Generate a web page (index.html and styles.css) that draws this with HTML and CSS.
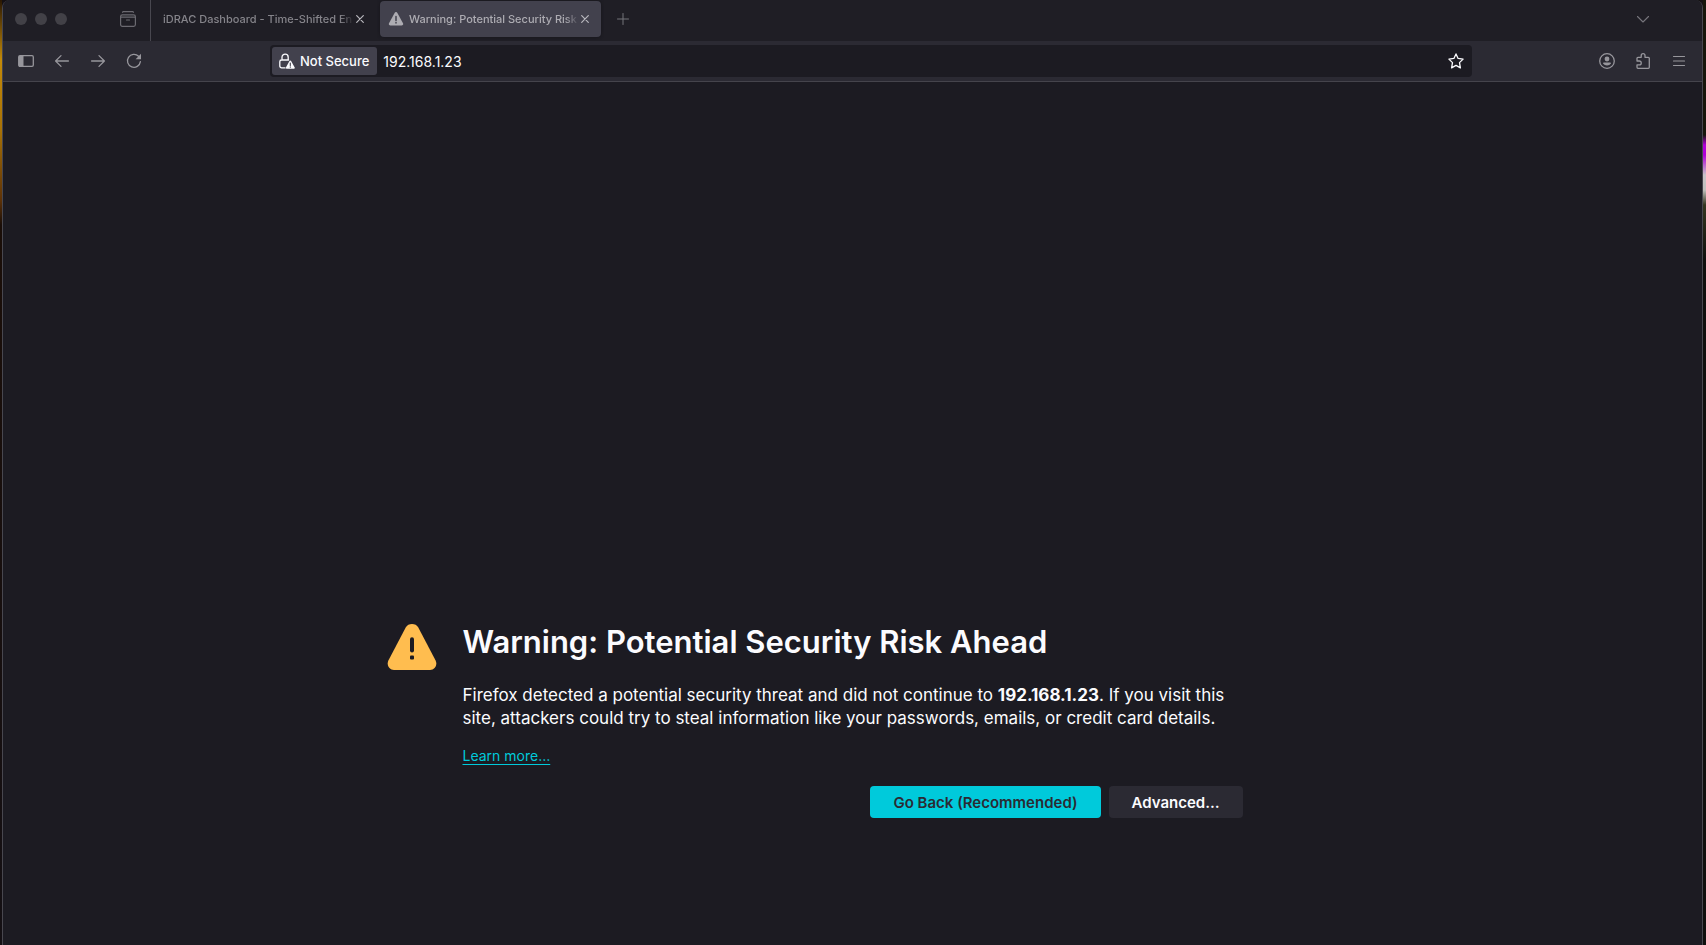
FILE: index.html
```html
<!DOCTYPE html>
<html lang="en">
<head>
<meta charset="utf-8">
<title>Warning: Potential Security Risk Ahead</title>
<link rel="stylesheet" href="styles.css">
</head>
<body>
<div class="window">
  <header class="tabbar">
    <div class="lights"><span class="light"></span><span class="light"></span><span class="light"></span></div>
    <button class="tool view-button" aria-label="Firefox View">
      <svg width="16" height="16" viewBox="0 0 16 16" fill="none" stroke="currentColor" stroke-width="1.2" stroke-linecap="round"><path d="M2.5 1.300Q2.800.7 3.500.7h9q.7 0 1 .6"/><rect x=".6" y="3.900" width="14.800" height="11.400" rx="1.800"/><path d="M.8 6.200h14.400M6.500 9h3"/></svg>
    </button>
    <div class="tabs">
      <div class="tab">
        <span class="tab-label">iDRAC Dashboard - Time-Shifted En</span>
        <button class="close" aria-label="Close tab"><svg width="8" height="8" viewBox="0 0 8 8" stroke="currentColor" stroke-width="1.2" stroke-linecap="round"><path d="M.7.7l6.600 6.600M7.300.7L.7 7.300"/></svg></button>
      </div>
      <div class="tab tab-active">
        <svg class="tab-icon" width="16" height="16" viewBox="0 0 16 16"><path fill="currentColor" d="M6.600 1.900a1.600 1.600 0 0 1 2.800 0l5.600 10.400a1.600 1.600 0 0 1-1.400 2.300H2.400A1.600 1.600 0 0 1 1 12.300z"/><path d="M8 5.600v3.800M8 11.600v.4" stroke="#42414d" stroke-width="1.500" stroke-linecap="round"/></svg>
        <span class="tab-label">Warning: Potential Security Risk</span>
        <button class="close" aria-label="Close tab"><svg width="8" height="8" viewBox="0 0 8 8" stroke="currentColor" stroke-width="1.2" stroke-linecap="round"><path d="M.7.7l6.600 6.600M7.300.7L.7 7.300"/></svg></button>
      </div>
    </div>
    <button class="tool dim" aria-label="New tab"><svg width="12" height="12" viewBox="0 0 12 12" stroke="currentColor" stroke-linecap="round"><path d="M6 .5v11M.5 6h11"/></svg></button>
    <button class="tool dim all-tabs" aria-label="List all tabs"><svg width="14" height="14" viewBox="0 0 14 14" fill="none" stroke="currentColor" stroke-width="1.1" stroke-linecap="round" stroke-linejoin="round"><path d="M1.500 4.500L7 10l5.500-5.500"/></svg></button>
  </header>

  <nav class="navbar">
    <button class="tool" aria-label="Sidebar"><svg width="16" height="16" viewBox="0 0 16 16" fill="none" stroke="currentColor" stroke-width="1.3"><rect x=".7" y="2.700" width="14.600" height="10.600" rx="1.300"/><path fill="currentColor" stroke="none" d="M1 3h4.500v10H1z"/></svg></button>
    <button class="tool" aria-label="Back"><svg width="16" height="16" viewBox="0 0 16 16" fill="none" stroke="currentColor" stroke-width="1.300" stroke-linecap="round" stroke-linejoin="round"><path d="M14.400 8H1.600M7 2.600L1.600 8 7 13.400"/></svg></button>
    <button class="tool" aria-label="Forward"><svg width="16" height="16" viewBox="0 0 16 16" fill="none" stroke="currentColor" stroke-width="1.300" stroke-linecap="round" stroke-linejoin="round"><path d="M1.600 8h12.800M9 2.600L14.400 8 9 13.400"/></svg></button>
    <button class="tool" aria-label="Reload"><svg width="16" height="16" viewBox="0 0 16 16" fill="none" stroke="currentColor" stroke-width="1.300" stroke-linecap="round"><path d="M12.600 3.300A6.500 6.500 0 1 0 14.400 8.700"/><path fill="currentColor" stroke="none" d="M15 .8v5.400H9.600z"/></svg></button>
    <div class="urlbar">
      <button class="identity">
        <svg width="16" height="16" viewBox="0 0 16 16" fill="none"><path d="M3 7V4.200a3.100 3.100 0 0 1 6.200 0V7M6 14.900H2.600A1.800 1.800 0 0 1 .8 13.100V8.800A1.800 1.800 0 0 1 2.600 7h7" stroke="currentColor" stroke-width="1.300" stroke-linecap="round"/><path fill="currentColor" d="M10.500 7.900a.9.9 0 0 1 1.600 0l3.600 6.500a.9.9 0 0 1-.8 1.400H7.700a.9.9 0 0 1-.8-1.400z"/><path d="M11.300 10v2.400M11.300 13.900v.3" stroke="#42414d" stroke-width="1.100" stroke-linecap="round"/></svg>
        <span>Not Secure</span>
      </button>
      <input class="address" type="text" value="192.168.1.23" aria-label="Address">
      <button class="bookmark" aria-label="Bookmark this page"><svg width="16" height="16" viewBox="0 0 16 16" fill="none" stroke="currentColor" stroke-width="1.300" stroke-linejoin="round"><path d="M8 .9l2.100 4.500 5 .7-3.600 3.500.9 5.300-4.400-2.500-4.400 2.500.9-5.300L.9 6.100l5-.7z"/></svg></button>
    </div>
    <button class="tool" aria-label="Account"><svg width="16" height="16" viewBox="0 0 16 16"><circle cx="8" cy="8" r="7.300" fill="none" stroke="currentColor" stroke-width="1.300"/><circle cx="8" cy="6" r="2.400" fill="currentColor"/><path fill="currentColor" d="M4.900 9.600h6.200q.9 0 .9.900Q10.500 12.600 8 12.600T4 10.500q0-.9.900-.9z"/></svg></button>
    <button class="tool" aria-label="Extensions"><svg width="16" height="16" viewBox="0 0 16 16" fill="none" stroke="currentColor" stroke-width="1.300" stroke-linejoin="round"><path d="M2 8V5.300a1 1 0 0 1 1-1h3.200V2.600a1.900 1.900 0 0 1 3.800 0v1.700h3.300a1 1 0 0 1 1 1v9a1 1 0 0 1-1 1H3a1 1 0 0 1-1-1v-2.400h2.300a1.900 1.900 0 0 0 0-3.900z"/></svg></button>
    <button class="tool" aria-label="Menu"><svg width="14" height="14" viewBox="0 0 14 14" stroke="currentColor" stroke-width="1.200" stroke-linecap="round"><path d="M1.500 2.500h11M1.500 7h11M1.500 11.500h11"/></svg></button>
  </nav>

  <main class="page">
    <section class="warning">
      <svg class="warning-icon" width="50" height="48" viewBox="0 0 50 48"><path fill="#ffbd4f" d="M18.700 4.400C21.200-.1 28.800-.1 31.300 4.400L48.600 37.500C50.700 41.800 47.900 47 43 47H7C2.100 47-.7 41.800 1.400 37.500z"/><path d="M25 16.200v11.400" stroke="#1c1b22" stroke-width="4" stroke-linecap="round"/><rect x="23" y="32.500" width="4" height="4" rx="1" fill="#1c1b22"/></svg>
      <h1>Warning: Potential Security Risk Ahead</h1>
      <p>Firefox detected a potential security threat and did not continue to <b>192.168.1.23</b>. If you visit this site, attackers could try to steal information like your passwords, emails, or credit card details.</p>
      <a class="learn" href="#">Learn more…</a>
      <div class="actions">
        <button class="btn primary">Go Back (Recommended)</button>
        <button class="btn">Advanced…</button>
      </div>
    </section>
  </main>
</div>
</body>
</html>
```
FILE: styles.css
```css
* { box-sizing: border-box; }

body {
  margin: 0;
  min-height: 100vh;
  padding: 0 3px 0 2px;
  display: flex;
  font-family: Inter, "Liberation Sans", sans-serif;
  color: #fbfbfe;
  background:
    linear-gradient(#17160b 0, #17160b 135px, #b000d8 145px, #b000d8 155px, #c8c4c8 175px, #c0c0bc 190px, #34351f 205px, #10100e 260px) right / 3px 100% no-repeat,
    linear-gradient(#2a1803 0, #c48a08 60px, #a87206 130px, #5e3206 200px, #1a0e08 225px, #141014 100%) left / 2px 100% no-repeat,
    #141014;
}

button {
  font: inherit;
  color: inherit;
  background: none;
  border: 0;
  padding: 0;
}

svg { display: block; flex: none; }

.window {
  flex: 1;
  min-width: 0;
  display: flex;
  flex-direction: column;
  border: solid #48474f;
  border-width: 0 1px;
  border-radius: 8px 8px 0 0;
  background: #1c1b22;
  overflow: hidden;
}

.tabbar {
  display: flex;
  align-items: center;
  height: 41px;
  padding: 0 41px 3px 12px;
  background: #1f1e25;
}

.lights { display: flex; gap: 8px; }

.light {
  width: 12px;
  height: 12px;
  border-radius: 50%;
  background: #424147;
}

.tool {
  display: flex;
  align-items: center;
  justify-content: center;
  width: 36px;
  height: 32px;
  color: #97969c;
}

.dim { color: #75747b; }

.view-button {
  margin: 0 4px 0 43px;
  color: #6b6a71;
}

.tabs {
  display: flex;
  align-items: center;
  align-self: flex-start;
  height: 41px;
  padding-bottom: 3px;
  border-left: 1px solid #48474f;
}

.tab {
  display: flex;
  align-items: center;
  width: 229px;
  height: 36px;
  padding: 0 16px 0 12px;
  font-size: 11px;
  font-weight: 500;
  color: #85848a;
}

.tab-active {
  width: 221px;
  padding: 0 12px 0 8px;
  border-radius: 4px;
  background: #42414d;
  color: #adacb2;
  box-shadow: 0 0 3px #15141a;
}

.tab-icon { margin-right: 5px; }

.tab-label {
  flex: 1;
  min-width: 0;
  overflow: hidden;
  white-space: nowrap;
  mask-image: linear-gradient(to left, transparent, #000 14px);
}

.close {
  margin-left: 2px;
  color: #b9b8be;
}

.tabs + .tool { margin-left: 4px; }

.tabs + .tool + .all-tabs { margin-left: auto; }

.navbar {
  display: flex;
  align-items: center;
  height: 41px;
  padding: 0 5px;
  background: #2b2a33;
  border-bottom: 1px solid #45444c;
}

.urlbar {
  flex: 1;
  display: flex;
  align-items: center;
  height: 32px;
  margin: 0 117px 0 118px;
  padding: 2px;
  border-radius: 4px;
  background: #1c1b22;
}

.identity {
  display: flex;
  align-items: center;
  gap: 5px;
  height: 28px;
  padding: 0 8px 0 7px;
  border-radius: 3px;
  background: #42414d;
  font-size: 13px;
  font-weight: 500;
}

.address {
  flex: 1;
  min-width: 0;
  height: 28px;
  padding: 0 6px;
  border: 0;
  outline: 0;
  background: none;
  color: #fbfbfe;
  font: 14px Inter, "Liberation Sans", sans-serif;
}

.bookmark { padding: 6px; }

.page {
  flex: 1;
  padding: 538px 40px 40px;
}

.warning {
  position: relative;
  max-width: 780px;
  margin: 0 auto;
}

.warning-icon {
  position: absolute;
  top: 3px;
  left: -76px;
}

h1 {
  margin: 0 0 20px;
  font-size: 31px;
  line-height: 44px;
  font-weight: 600;
}

p {
  margin: 0 0 15px;
  font-size: 17px;
  line-height: 23px;
}

.learn {
  display: inline-block;
  color: #00cadb;
  font-size: 14px;
  line-height: 20px;
  text-underline-offset: 3px;
}

.actions {
  display: flex;
  justify-content: flex-end;
  gap: 8px;
  margin-top: 20px;
}

.btn {
  height: 32px;
  padding: 0 23px;
  border-radius: 4px;
  background: #2b2a33;
  font-size: 15px;
  font-weight: 600;
}

.primary {
  background: #00cadb;
  color: #2b2a33;
}
```
